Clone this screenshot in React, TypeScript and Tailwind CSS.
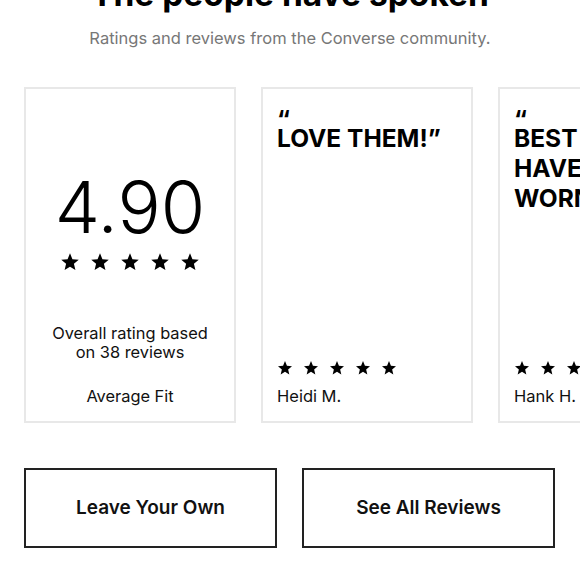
import React from "react";

function Star({ size }: { size: number }) {
  return (
    <svg width={size} height={size} viewBox="0 0 24 24" className="block">
      <polygon
        points="12,1.5 14.9,8.6 22.5,9.2 16.7,14.1 18.5,21.6 12,17.6 5.5,21.6 7.3,14.1 1.5,9.2 9.1,8.6"
        fill="#000"
      />
    </svg>
  );
}

function Stars({ size, gap }: { size: number; gap: string }) {
  return (
    <div className={`flex ${gap}`}>
      {[0, 1, 2, 3, 4].map((i) => (
        <Star key={i} size={size} />
      ))}
    </div>
  );
}

function ReviewCard({ title, name }: { title: string; name: string }) {
  return (
    <div className="w-[212px] h-[336px] shrink-0 border-2 border-[#e8e8e8] flex flex-col justify-between px-[14px] pt-[28px] pb-[15px]">
      <div>
        <div className="text-[24px] font-bold leading-[6px] text-black">“</div>
        <div className="text-[24.5px] font-bold leading-[30px] text-black uppercase">{title}</div>
      </div>
      <div>
        <Stars size={16} gap="gap-[10px]" />
        <div className="text-[16.5px] leading-[19px] mt-[11px] text-[#111]">{name}</div>
      </div>
    </div>
  );
}

export default function App() {
  return (
    <div className="w-[580px] h-[580px] overflow-hidden bg-white font-['Inter',sans-serif] text-black">
      <h2 className="text-[33.5px] font-bold leading-[33px] text-center -mt-[22px] whitespace-nowrap">
        The people have spoken
      </h2>
      <p className="text-[16.5px] leading-[24px] text-center text-[#777] mt-[15px]">
        Ratings and reviews from the Converse community.
      </p>
      <div className="flex gap-[25px] pl-[24px] mt-[37px]">
        <div className="w-[212px] h-[336px] shrink-0 border-2 border-[#e8e8e8] flex flex-col items-center pt-[81px] text-center">
          <div className="text-[72px] font-light leading-[74px]">4.90</div>
          <div className="mt-[8px]">
            <Stars size={20} gap="gap-[10px]" />
          </div>
          <div className="text-[16.4px] leading-[19px] mt-[52px] text-[#111]">
            Overall rating based
            <br />
            on 38 reviews
          </div>
          <div className="text-[16.4px] leading-[19px] mt-[25px] text-[#111]">Average Fit</div>
        </div>
        <ReviewCard title="Love them!”" name="Heidi M." />
        <ReviewCard title="Best shoes I have ever worn!”" name="Hank H." />
      </div>
      <div className="flex gap-[25px] px-[24px] mt-[45px]">
        <button className="w-[253px] h-[80px] border-2 border-[#222] text-[19px] font-semibold text-[#111]">
          Leave Your Own
        </button>
        <button className="w-[253px] h-[80px] border-2 border-[#222] text-[19px] font-semibold text-[#111]">
          See All Reviews
        </button>
      </div>
    </div>
  );
}
